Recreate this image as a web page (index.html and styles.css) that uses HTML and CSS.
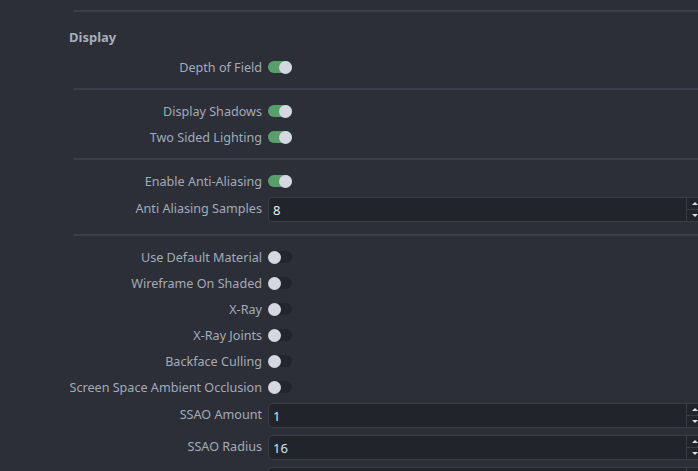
FILE: index.html
```html
<!DOCTYPE html>
<html>
<head>
<meta charset="utf-8">
<link rel="stylesheet" href="styles.css">
</head>
<body>
<div class="panel">
  <div class="sep"></div>
  <div class="heading">Display</div>
  <div class="group">
    <div class="row"><span class="label">Depth of Field</span><span class="toggle on"><i></i></span></div>
  </div>
  <div class="sep"></div>
  <div class="group">
    <div class="row"><span class="label">Display Shadows</span><span class="toggle on"><i></i></span></div>
    <div class="row"><span class="label">Two Sided Lighting</span><span class="toggle on"><i></i></span></div>
  </div>
  <div class="sep"></div>
  <div class="group">
    <div class="row"><span class="label">Enable Anti-Aliasing</span><span class="toggle on"><i></i></span></div>
    <div class="row spinrow"><span class="label">Anti Aliasing Samples</span><span class="spin"><span class="val">8</span><span class="btns"><span class="up"></span><span class="down"></span></span></span></div>
  </div>
  <div class="sep"></div>
  <div class="group">
    <div class="row"><span class="label">Use Default Material</span><span class="toggle"><i></i></span></div>
    <div class="row"><span class="label">Wireframe On Shaded</span><span class="toggle"><i></i></span></div>
    <div class="row"><span class="label">X-Ray</span><span class="toggle"><i></i></span></div>
    <div class="row"><span class="label">X-Ray Joints</span><span class="toggle"><i></i></span></div>
    <div class="row"><span class="label">Backface Culling</span><span class="toggle"><i></i></span></div>
    <div class="row"><span class="label">Screen Space Ambient Occlusion</span><span class="toggle"><i></i></span></div>
    <div class="row spinrow"><span class="label">SSAO Amount</span><span class="spin"><span class="val num">1</span><span class="btns"><span class="up"></span><span class="down"></span></span></span></div>
    <div class="row spinrow"><span class="label">SSAO Radius</span><span class="spin"><span class="val num">16</span><span class="btns"><span class="up"></span><span class="down"></span></span></span></div>
    <div class="row spinrow"><span class="label"></span><span class="spin"><span class="val num"></span><span class="btns"><span class="up"></span><span class="down"></span></span></span></div>
  </div>
</div>
</body>
</html>
```
FILE: styles.css
```css
html, body {
  margin: 0;
  padding: 0;
  background: #2c2f38;
  overflow: hidden;
  height: 471px;
}
.panel {
  padding-top: 10px;
  font-family: "Noto Sans", "Open Sans", sans-serif;
  font-size: 12.6px;
  color: #a3abb9;
}
.sep {
  height: 2px;
  margin-left: 74px;
  background: #3a3e4a;
}
.heading {
  height: 34px;
  margin-top: 8px;
  padding-left: 69px;
  font-size: 13px;
  font-weight: bold;
  display: flex;
  align-items: center;
  color: #a6aebb;
}
.group {
  padding: 8px 0;
}
.heading + .group {
  padding-top: 0;
}
.row {
  display: grid;
  grid-template-columns: 262px auto;
  column-gap: 6px;
  height: 26px;
  align-items: center;
}
.spinrow {
  height: 32px;
  align-items: start;
  padding-top: 3px;
  box-sizing: border-box;
}
.label {
  text-align: right;
  white-space: nowrap;
  padding-top: 1px;
}
.spinrow .label {
  line-height: 23px;
  padding-top: 0;
}
.toggle {
  position: relative;
  width: 24px;
  height: 12px;
  border-radius: 6px;
  background: #22252c;
}
.toggle.on {
  background: #57a06c;
}
.toggle i {
  position: absolute;
  left: 0;
  top: -0.5px;
  width: 13px;
  height: 13px;
  border-radius: 50%;
  background: #d5d8e1;
}
.toggle.on i {
  left: auto;
  right: 0;
}
.spin {
  display: flex;
  width: 440px;
  height: 25px;
  box-sizing: border-box;
  border: 1px solid #393d48;
  border-radius: 4px;
  background: #21242b;
}
.val {
  flex: 1;
  padding-left: 4px;
  line-height: 25px;
  font-size: 13px;
  color: #eef0f4;
}
.val.num {
  color: #d7e3f5;
}
.btns {
  width: 20px;
  border-left: 1px solid #393d48;
  display: flex;
  flex-direction: column;
}
.btns span {
  flex: 1;
  position: relative;
}
.btns .up {
  border-bottom: 1px solid #393d48;
}
.btns .up::after,
.btns .down::after {
  content: "";
  position: absolute;
  left: 5px;
  width: 0;
  height: 0;
  border-left: 3px solid transparent;
  border-right: 3px solid transparent;
}
.btns .up::after {
  top: 4px;
  border-bottom: 3px solid #d9dce3;
}
.btns .down::after {
  top: 4px;
  border-top: 3px solid #d9dce3;
}
```
